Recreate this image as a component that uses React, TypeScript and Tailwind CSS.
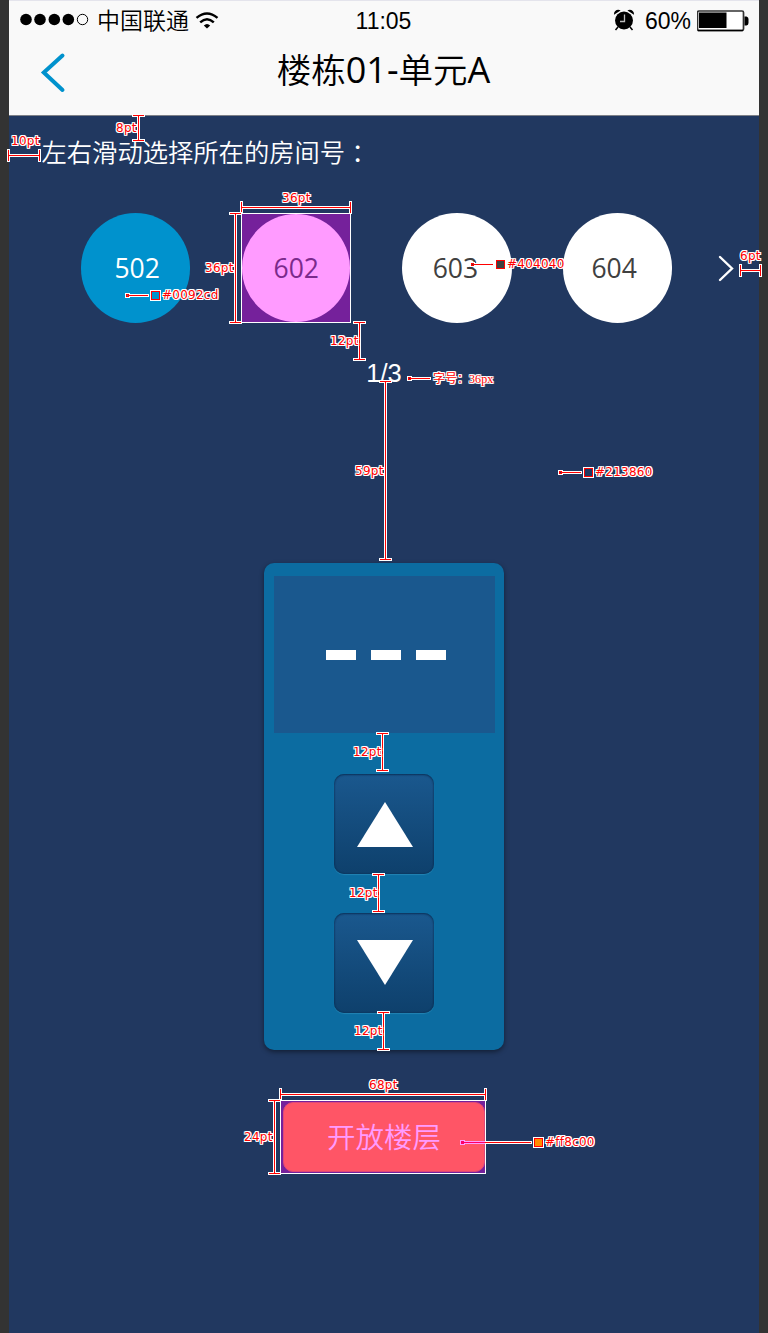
import React from "react";

type Dim = { dir: "h" | "v"; at: number; from: number; to: number };
type Label = { text: string; x: number; baseline: number };
type Callout = { x: number; y: number; end: number; swatch?: string };

const dims: Dim[] = [
  { dir: "v", at: 138.5, from: 115.5, to: 140.5 },
  { dir: "h", at: 155.5, from: 8.5, to: 39.5 },
  { dir: "h", at: 207.5, from: 241.5, to: 350.5 },
  { dir: "v", at: 235.5, from: 213.5, to: 322.5 },
  { dir: "v", at: 359.5, from: 322.5, to: 359.5 },
  { dir: "v", at: 385.5, from: 381.5, to: 559.5 },
  { dir: "h", at: 270.5, from: 740.5, to: 760.5 },
  { dir: "v", at: 382.5, from: 733.5, to: 770.5 },
  { dir: "v", at: 378.5, from: 874.5, to: 911.5 },
  { dir: "v", at: 383.5, from: 1012.5, to: 1049.5 },
  { dir: "h", at: 1094.5, from: 280.5, to: 485.5 },
  { dir: "v", at: 274.5, from: 1100.5, to: 1173.5 },
];

const labels: Label[] = [
  { text: "8pt", x: 116, baseline: 132 },
  { text: "10pt", x: 11, baseline: 145 },
  { text: "36pt", x: 282, baseline: 202 },
  { text: "36pt", x: 205, baseline: 272 },
  { text: "12pt", x: 330, baseline: 345 },
  { text: "59pt", x: 355, baseline: 475 },
  { text: "6pt", x: 740, baseline: 260 },
  { text: "12pt", x: 353, baseline: 756 },
  { text: "12pt", x: 349, baseline: 897 },
  { text: "12pt", x: 354, baseline: 1035 },
  { text: "68pt", x: 369, baseline: 1089 },
  { text: "24pt", x: 244, baseline: 1141 },
  { text: "#0092cd", x: 162, baseline: 299 },
  { text: "#404040", x: 507, baseline: 268 },
  { text: "#213860", x: 595, baseline: 476 },
  { text: "#ff8c00", x: 545, baseline: 1146 },
];

const callouts: Callout[] = [
  { x: 127.5, y: 295.5, end: 148, swatch: "#0092cd" },
  { x: 472.5, y: 264.5, end: 493, swatch: "#404040" },
  { x: 409.5, y: 378.5, end: 430 },
  { x: 560.5, y: 472.5, end: 581, swatch: "#213860" },
  { x: 462.5, y: 1142.5, end: 531, swatch: "#ff8c00" },
];

const rooms = [
  { no: "502", circle: "bg-[#0092cd] text-white pl-[3px]" },
  { no: "602", circle: "bg-[#ff9bff] text-[#7b2a8c]", selected: true },
  { no: "603", circle: "bg-white text-[#404040] pr-[3px]" },
  { no: "604", circle: "bg-white text-[#404040] pr-[7px]" },
];

function dimPath({ dir, at, from, to }: Dim, cap: number) {
  return dir === "h"
    ? `M${from} ${at}H${to}M${from} ${at - cap}V${at + cap}M${to} ${at - cap}V${at + cap}`
    : `M${at} ${from}V${to}M${at - cap} ${from}H${at + cap}M${at - cap} ${to}H${at + cap}`;
}

function Annotations() {
  return (
    <div className="pointer-events-none absolute inset-0">
      <svg
        className="absolute inset-0"
        width="768"
        height="1333"
        viewBox="0 0 768 1333"
        fill="none"
        shapeRendering="crispEdges"
      >
        {dims.map((d, i) => (
          <g key={i}>
            <path d={dimPath(d, 6.5)} stroke="#fff" strokeWidth="3" />
            <path d={dimPath(d, 5.5)} stroke="#f00" strokeWidth="1" />
          </g>
        ))}
        {callouts.map((c, i) => (
          <g key={i}>
            <path d={`M${c.x} ${c.y}H${c.end + 1}`} stroke="#fff" strokeWidth="3" />
            <rect x={c.x - 2.5} y={c.y - 2.5} width="5" height="5" fill="#fff" />
            <path d={`M${c.x} ${c.y}H${c.end}`} stroke="#f00" strokeWidth="1" />
            <rect x={c.x - 1} y={c.y - 1} width="2" height="2" fill={c.swatch ?? "#213860"} stroke="#f00" />
            {c.swatch && (
              <>
                <rect x={c.end + 2} y={c.y - 5.5} width="11" height="11" fill="#fff" />
                <rect x={c.end + 3.5} y={c.y - 4} width="8" height="8" fill={c.swatch} stroke="#f00" />
              </>
            )}
          </g>
        ))}
        <rect x="460.5" y="1140.5" width="4" height="4" fill="#ff0066" stroke="#ff9bff" />
        <path d="M465 1141.5H485M465 1143.5H485" stroke="#ff9bff" />
        <path d="M463 1142.5H485" stroke="#ff0066" />
      </svg>
      {labels.map((l, i) => (
        <span
          key={i}
          className="absolute whitespace-nowrap font-['DejaVu_Sans',sans-serif] text-[12px] leading-4 tracking-[0.25px] text-[#f00] [text-shadow:1px_0_#fff,-1px_0_#fff,0_1px_#fff,0_-1px_#fff,1px_1px_#fff,-1px_-1px_#fff,1px_-1px_#fff,-1px_1px_#fff]"
          style={{ left: l.x, top: l.baseline - 12 }}
        >
          {l.text}
        </span>
      ))}
      <span className="absolute left-[433px] top-[370px] whitespace-nowrap font-['Noto_Sans_CJK_SC',sans-serif] text-[12px] leading-4 text-[#f00] [text-shadow:1px_0_#fff,-1px_0_#fff,0_1px_#fff,0_-1px_#fff,1px_1px_#fff,-1px_-1px_#fff,1px_-1px_#fff,-1px_1px_#fff]">
        字号：<span className="font-['Liberation_Serif',serif] tracking-[0.1px]">36px</span>
      </span>
    </div>
  );
}

function StatusBar() {
  return (
    <div className="grid h-[39px] grid-cols-3 items-center text-[23px] leading-[30px] text-black">
      <div className="flex items-center pl-[10px]">
        <svg className="-mt-[2px]" width="72" height="14" viewBox="0 0 72 14">
          <circle cx="7" cy="6.5" r="5.8" />
          <circle cx="21" cy="6.5" r="5.8" />
          <circle cx="35.3" cy="6.5" r="5.8" />
          <circle cx="49.3" cy="6.5" r="5.8" />
          <circle cx="63.5" cy="6.5" r="5.2" fill="none" stroke="#000" />
        </svg>
        <span className="-mt-[4px] ml-[6px] whitespace-nowrap font-['Noto_Sans_CJK_SC',sans-serif] font-[350]">中国联通</span>
        <svg className="ml-[6px] mt-px" width="24" height="18" viewBox="0 0 24 18" fill="none" stroke="#000" strokeWidth="2.4">
          <path d="M1.5 5.8Q12 -3 22.5 5.8" />
          <path d="M5.2 10.3Q12 4 18.8 10.3" />
          <path d="M12 16.5L8.8 13.5Q12 10.5 15.2 13.5Z" fill="#000" stroke="none" />
        </svg>
      </div>
      <div className="pr-[1px] text-center font-['Liberation_Sans',sans-serif]">11:05</div>
      <div className="flex items-center justify-end pr-[10px]">
        <svg className="-mt-px" width="22" height="22" viewBox="0 0 22 22" fill="none" stroke="#000">
          <circle cx="11" cy="11.5" r="9" fill="#000" stroke="none" />
          <path d="M1 5.8C.5 2 4.5-.5 7.6 1.5ZM21 5.8C21.5 2 17.5-.5 14.4 1.5Z" fill="#000" stroke="none" />
          <path d="M5 18L2.5 21M17 18L19.5 21" strokeWidth="1.5" />
          <path d="M11.5 5.5V12.5H7" stroke="#bbb" strokeWidth="1.3" />
        </svg>
        <span className="ml-[10px] font-['Liberation_Sans',sans-serif]">60%</span>
        <svg className="-mr-px ml-[6px]" width="53" height="22" viewBox="0.5 0 53 22">
          <rect x="1" y="1" width="46" height="19.5" rx="1.5" fill="#fff" stroke="#333" strokeWidth="1.7" />
          <rect x="2.5" y="2.5" width="27.5" height="15.5" />
          <path d="M1.5 20.5H46.5" stroke="#000" strokeWidth="1.5" />
          <path d="M48 6.5H50Q52 7 52 9V13Q52 15 50 15.5H48Z" />
        </svg>
      </div>
    </div>
  );
}

function LiftButton({ down = false }: { down?: boolean }) {
  return (
    <button className="flex h-[100px] w-[100px] justify-center rounded-[10px] bg-linear-to-b from-[#1a588e] to-[#0e406c] pl-[2px] pt-[28px] shadow-[inset_0_1px_2px_rgba(0,20,50,0.5),inset_0_0_2px_rgba(0,20,50,0.4),0_1px_1px_rgba(60,160,200,0.45)]">
      <svg className={down ? "-mt-px rotate-180" : ""} width="56" height="45" viewBox="0 0 56 45">
        <path d="M28 0L56 45H0Z" fill="#fff" />
      </svg>
    </button>
  );
}

export default function App() {
  return (
    <div className="relative flex h-[1333px] w-[768px] justify-center overflow-hidden bg-[#333]">
      <div className="flex w-[750px] flex-col bg-[#213860]">
        <header className="h-[116px] border-t border-b border-t-[#e4e4ec] border-b-[#7d8087] bg-[#f9f9f9]">
          <StatusBar />
          <div className="grid grid-cols-[100px_1fr_100px] pt-[7px]">
            <svg className="ml-[31px] mt-[4px]" width="28" height="44" viewBox="0 0 28 44" fill="none">
              <path d="M22.5 4.5L3.8 21.5L22.5 39" stroke="#0092cd" strokeWidth="4" strokeLinecap="round" />
            </svg>
            <h1 className="whitespace-nowrap pr-px text-center font-['Open_Sans','Noto_Sans_CJK_SC',sans-serif] text-[34.5px] font-[350] leading-[46px] text-black">
              楼栋<span className="text-[36px] font-normal">01-</span>单元<span className="text-[36px] font-normal">A</span>
            </h1>
          </div>
        </header>

        <p className="mt-[21px] h-[30px] whitespace-nowrap pl-[32.5px] font-['Noto_Sans_CJK_SC',sans-serif] text-[25.3px] font-[350] leading-[29px] text-white">
          左右滑动选择所在的房间号<span className="relative top-px font-['Noto_Sans_CJK_TC',sans-serif]">：</span>
        </p>

        <div className="mt-[46px] flex h-[110px] items-center pl-[72px]">
          <div className="flex items-center gap-[51.4px]">
            {rooms.map((r) => (
              <div
                key={r.no}
                className={
                  r.selected
                    ? "-mx-[0.5px] h-[110px] w-[110px] border border-white bg-[#75219b]"
                    : "h-[109.4px] w-[109.4px]"
                }
              >
                <div
                  className={`flex h-full w-full items-center justify-center rounded-full font-['Open_Sans',sans-serif] text-[26.5px] leading-[36px] ${r.circle}`}
                >
                  {r.no}
                </div>
              </div>
            ))}
          </div>
          <svg className="ml-[44.5px]" width="20" height="28" viewBox="0 0 20 28" fill="none">
            <path d="M3 3L15 14.5L3 26" stroke="#fff" strokeWidth="2.4" strokeLinecap="round" />
          </svg>
        </div>

        <div className="mt-[35px] h-[30px] text-center font-['Liberation_Sans',sans-serif] text-[25.5px] leading-[30px] text-white">
          1/3
        </div>

        <section className="mx-auto mt-[174.5px] flex h-[487px] w-[240px] shrink-0 flex-col items-center rounded-[10px] bg-[#0c6ca1] pt-[13.5px] shadow-[0_2px_5px_rgba(0,0,0,0.45)]">
          <div className="flex h-[156.5px] w-[221px] items-center justify-center gap-[15px] bg-[#1a588e] pl-[3px] pt-[1.5px]">
            <i className="h-[10px] w-[30px] bg-white" />
            <i className="h-[10px] w-[30px] bg-white" />
            <i className="h-[10px] w-[30px] bg-white" />
          </div>
          <div className="mt-[41px] flex flex-col gap-[39px]">
            <LiftButton />
            <LiftButton down />
          </div>
        </section>

        <div className="ml-[271px] mt-[50.5px] h-[74px] w-[206px] border border-white bg-[#75219b] py-px pl-[2px]">
          <button className="flex h-[70px] w-[202px] items-center justify-center rounded-[10px] border border-[#e04878] bg-[#ff5566] pb-[2px] font-['Noto_Sans_CJK_SC',sans-serif] text-[28.5px] font-[350] leading-[36px] text-[#ff9bff]">
            开放楼层
          </button>
        </div>
      </div>
      <Annotations />
    </div>
  );
}
